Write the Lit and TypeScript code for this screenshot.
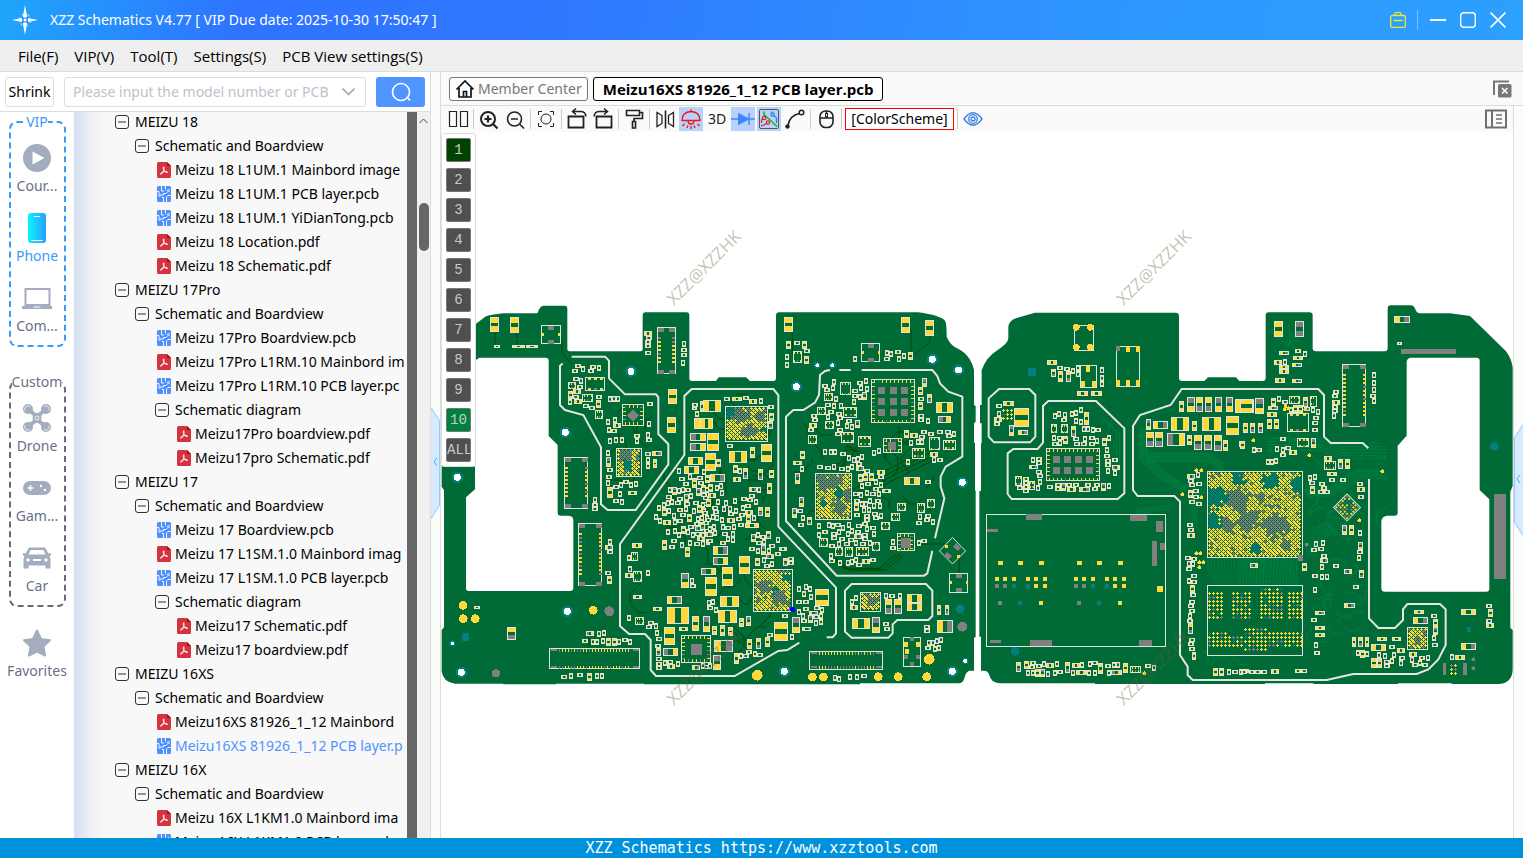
import { LitElement, html, svg, css, nothing } from "lit";
import { customElement, property } from "lit/decorators.js";
import { classMap } from "lit/directives/class-map.js";

/* ---------- board artwork ---------- */

type Ink = "trace" | "glow" | "line" | "base" | "gray" | "gold" | "teal" | "white" | "blue";
const INK: Record<Ink, string> = {
  trace: "#004b00",
  glow: "#008040",
  line: "#dfe4df",
  base: "#006b36",
  gray: "#808080",
  gold: "#ffd83c",
  teal: "#008080",
  white: "#ffffff",
  blue: "#0000ff",
};

let seed = 7;
const rnd = () => {
  seed = (seed * 1664525 + 1013904223) >>> 0;
  return seed / 4294967296;
};
const snap = (n: number) => Math.round(n / 3) * 3;

/* A tile holds artwork in thirds of a pixel, relative to its own origin. */
class Tile {
  layers: Partial<Record<Ink, string>> = {};
  taken: number[][] = [];
  traces = { trace: "", glow: "" };
  constructor(public ox: number, public oy: number) {}

  fill(ink: Ink, x: number, y: number, w: number, h: number) {
    const W = Math.max(3, snap(w));
    const H = Math.max(3, snap(h));
    this.layers[ink] = (this.layers[ink] ?? "") + `M${snap(x)} ${snap(y)}h${W}v${H}h${-W}z`;
  }
  frame(x: number, y: number, w: number, h: number) {
    x = snap(x); y = snap(y); w = snap(w); h = snap(h);
    this.fill("line", x, y, w, h);
    this.fill("base", x + 3, y + 3, w - 6, h - 6);
    this.taken.push([x, y, w, h]);
  }
  part(x: number, y: number, w: number, h: number, kind = "y") {
    x = snap(x); y = snap(y); w = snap(w); h = snap(h);
    this.frame(x, y, w, h);
    const a: Ink = kind === "G" || kind === "b" ? "gray" : "gold";
    const b: Ink = kind === "g" || kind === "b" ? "gray" : "gold";
    if (w > h) {
      const p = Math.max(3, snap((w - 6) * 0.34));
      this.fill(a, x + 3, y + 3, p, h - 6);
      this.fill(b, x + w - 3 - p, y + 3, p, h - 6);
    } else {
      const p = Math.max(3, snap((h - 6) * 0.36));
      this.fill(a, x + 3, y + 3, w - 6, p);
      this.fill(b, x + 3, y + h - 3 - p, w - 6, p);
    }
  }
  parts(list: string) {
    for (const item of list.trim().split(/\s+/)) {
      const [x, y, w, h, k] = item.split(",");
      this.part(+x, +y, +w, +h, k);
    }
  }
  free(x: number, y: number, w: number, h: number) {
    return !this.taken.some(([a, b, c, d]) => x < a + c && x + w > a && y < b + d && y + h > b);
  }
  cluster(x: number, y: number, w: number, h: number, density = 0.7) {
    const tries = Math.round((w * h * density) / 36);
    for (let i = 0; i < tries; i++) {
      const tall = w < 16 ? true : h < 16 ? false : rnd() < 0.5;
      const long = rnd() < 0.25 ? 24 : 18;
      const short = long === 24 ? 15 : 12;
      const pw = tall ? short : long;
      const ph = tall ? long : short;
      if (pw > w + 3 || ph > h + 3) continue;
      const px = snap(x + rnd() * Math.max(0, w - pw));
      const py = snap(y + rnd() * Math.max(0, h - ph));
      if (!this.free(px, py, pw, ph)) continue;
      this.part(px, py, pw, ph, "yygGy"[Math.floor(rnd() * 5)]);
    }
  }
  connector(x: number, y: number, w: number, h: number) {
    this.frame(x, y, w, h);
    const flat = w > h;
    const len = flat ? w : h;
    for (const far of [false, true]) {
      for (let p = 30; p < len - 30; p += flat ? 9 : 12) {
        const ink: Ink = rnd() < 0.28 ? "gray" : "gold";
        if (flat) this.fill(ink, x + p, far ? y + h - 12 : y + 3, 3, 9);
        else this.fill(ink, far ? x + w - 12 : x + 3, y + p, 9, 6);
      }
      if (flat) {
        this.fill("gray", x + 6, far ? y + h - 12 : y + 3, 18, 6);
        this.fill("gray", x + w - 24, far ? y + h - 12 : y + 3, 18, 6);
      } else {
        this.fill("gray", far ? x + w - 21 : x + 3, y + 3, 18, 12);
        this.fill("gray", far ? x + w - 21 : x + 3, y + h - 15, 18, 12);
      }
    }
  }
  chip(x: number, y: number, w: number, h: number, cols: number, rows: number, pad = 24) {
    this.frame(x, y, w, h);
    for (let p = 9; p < w - 9; p += 12) {
      this.fill(rnd() < 0.15 ? "teal" : "gold", x + p, y + 3, 3, 9);
      this.fill(rnd() < 0.2 ? "gray" : "gold", x + p, y + h - 12, 3, 9);
    }
    for (let p = 9; p < h - 9; p += 12) {
      this.fill(rnd() < 0.3 ? "gray" : "gold", x + 3, y + p, 9, 3);
      this.fill(rnd() < 0.2 ? "gray" : "gold", x + w - 12, y + p, 9, 3);
    }
    const sx = (w - 30) / Math.max(cols, 1);
    const sy = (h - 30) / Math.max(rows, 1);
    for (let i = 0; i < cols; i++)
      for (let j = 0; j < rows; j++)
        this.fill("gray", x + 15 + sx * (i + 0.5) - pad / 2, y + 15 + sy * (j + 0.5) - pad / 2, pad, pad);
  }
  small(x: number, y: number, w: number, h: number) {
    this.frame(x, y, w, h);
    const px = w * 0.25;
    for (const fx of [0.12, 0.42, 0.72]) {
      this.fill("gold", x + w * fx + 1, y + 3, px / 2, 6);
      this.fill(fx > 0.4 && fx < 0.5 ? "gray" : "gold", x + w * fx + 1, y + h - 9, px / 2, 6);
    }
  }
  four(x: number, y: number, w: number, h: number) {
    this.frame(x, y, w, h);
    this.fill("gray", x + w / 2 - 9, y + 3, 18, 12);
    this.fill("gray", x + w / 2 - 9, y + h - 15, 18, 12);
    this.fill("gold", x + 3, y + h / 2 - 6, 6, 9);
    this.fill("gold", x + w - 9, y + h / 2 - 6, 6, 9);
  }
  plus(ink: Ink, x: number, y: number) {
    x = snap(x); y = snap(y);
    this.layers[ink] = (this.layers[ink] ?? "") + `M${x} ${y}h9v3h-9zM${x + 3} ${y - 3}h3v9h-3z`;
  }
  balls(x: number, y: number, w: number, h: number, patches: [Ink, number, number, number][] = []) {
    x = snap(x); y = snap(y); w = snap(w); h = snap(h);
    this.frame(x, y, w, h);
    for (let j = 0, py = y + 6; py < y + h - 6; py += 6, j++) {
      for (let px = x + 3 + (j % 2) * 6; px < x + w - 9; px += 12) {
        const hit = patches.find(([, cx, cy, r]) => Math.hypot((px - x) / w - cx, (py - y) / h - cy) < r * (0.6 + rnd() * 0.6));
        const ink: Ink = hit ? hit[0] : rnd() < 0.1 ? "gray" : "gold";
        this.plus(ink, px, py);
        if (ink === "gold" && rnd() < 0.3) this.fill("gold", px + 6, py + 3, 3, 3);
      }
    }
  }
  grid(x: number, y: number, cols: number, rows: number) {
    for (let i = 0; i < cols; i++)
      for (let j = 0; j < rows; j++) {
        const r = rnd();
        this.plus(r < 0.2 ? "gray" : r < 0.24 ? "teal" : "gold", x + i * 12, y + j * 12);
      }
  }
  wires(ink: "trace" | "glow", x: number, y: number, w: number, h: number, n: number) {
    for (let i = 0; i < n; i++) {
      let px = x + rnd() * w;
      let py = y + rnd() * h;
      let d = `M${snap(px)} ${snap(py)}`;
      let dir = Math.floor(rnd() * 8);
      for (let k = 0; k < 3; k++) {
        const step = 9 + rnd() * 27;
        const nx = px + Math.round(Math.cos((dir * Math.PI) / 4)) * step;
        const ny = py + Math.round(Math.sin((dir * Math.PI) / 4)) * step;
        if (nx < x || ny < y || nx > x + w || ny > y + h) break;
        px = nx;
        py = ny;
        d += `L${snap(px)} ${snap(py)}`;
        dir += rnd() < 0.5 ? 1 : -1;
      }
      this.traces[ink] += d;
    }
  }
  bus(ink: "trace" | "glow", points: number[][], count: number, dx: number, dy: number) {
    for (let i = 0; i < count; i++)
      this.traces[ink] += "M" + points.map(([x, y]) => `${x + i * dx} ${y + i * dy}`).join("L");
  }
  dots(ink: Ink, r: number, list: number[][]) {
    for (const [x, y] of list)
      this.layers[ink] =
        (this.layers[ink] ?? "") + `M${x - r} ${y}a${r} ${r} 0 1 1 ${2 * r} 0a${r} ${r} 0 1 1 ${-2 * r} 0z`;
  }
  holes(r: number, list: number[][]) {
    this.dots("teal", r, list);
    this.dots("white", r * 0.62, list);
  }
  wiring() {
    return svg`<g transform="translate(${this.ox} ${this.oy}) scale(.333333)" fill="none" stroke-width="3">
      <path d=${this.traces.trace} stroke=${INK.trace} />
      <path d=${this.traces.glow} stroke=${INK.glow} />
    </g>`;
  }
  render() {
    const order: Ink[] = ["line", "base", "gray", "gold", "teal", "white", "blue"];
    return svg`<g transform="translate(${this.ox} ${this.oy}) scale(.333333)">
      ${order.map((k) => (this.layers[k] ? svg`<path d=${this.layers[k]} fill=${INK[k]} />` : nothing))}
    </g>`;
  }
}

const A = new Tile(440, 290);
const B = new Tile(700, 290);
const C = new Tile(970, 290);
const D = new Tile(1240, 290);

/* left board, left half */
A.parts(`149,82,28,46 209,82,28,48 684,297,26,46 682,380,28,48 762,385,50,32 750,430,48,24,G 750,460,48,25,G
745,500,45,24 733,528,45,25 682,950,66,52 682,918,46,25,g 672,1010,34,55 670,1075,46,24,G 723,850,24,44,G
756,978,22,44 201,1010,27,38,g 637,482,30,14,g 640,507,13,28 498,502,16,30,G 500,590,17,33 565,604,28,12
575,760,30,14 580,915,27,13 755,350,16,10 780,332,28,34 163,165,18,8 217,165,40,8 257,165,36,8 103,948,18,10
640,952,27,13 718,1010,28,13 757,565,14,30 665,750,16,30 736,770,14,30`);
A.four(303, 106, 60, 58);
A.connector(652, 112, 56, 142);
A.connector(373, 500, 73, 156);
A.connector(415, 700, 73, 190);
A.connector(328, 1075, 274, 64);
A.chip(547, 343, 66, 66, 0, 0, 24);
A.chip(723, 1035, 90, 85, 1, 1, 33);
A.balls(527, 475, 78, 88, [["gray", 0.35, 0.2, 0.25], ["teal", 0.4, 0.6, 0.22], ["gray", 0.8, 0.3, 0.12]]);
A.small(435, 260, 60, 42);
A.small(427, 313, 34, 24);
A.small(466, 360, 24, 28);
A.small(383, 277, 24, 22);
A.small(574, 785, 22, 28);
A.small(580, 842, 27, 34);
A.small(586, 982, 27, 24);
const clustersA: number[][] = [
  [385, 222, 105, 30, 0.9], [378, 262, 55, 85, 0.5], [465, 315, 26, 40, 0.8], [420, 340, 50, 20, 0.7],
  [505, 315, 38, 30, 0.6], [498, 380, 48, 50, 0.7], [615, 335, 24, 20, 0.8], [614, 390, 26, 80, 0.6], [575, 430, 30, 40, 0.7],
  [495, 440, 60, 30, 0.5], [497, 472, 22, 130, 0.8], [610, 485, 26, 60, 0.7], [518, 570, 90, 28, 0.6], [515, 600, 40, 45, 0.5],
  [495, 740, 24, 62, 1], [495, 840, 22, 50, 1], [455, 605, 18, 68, 0.9], [613, 122, 24, 78, 1], [720, 143, 22, 88, 1],
  [422, 1020, 82, 22, 1], [422, 1045, 155, 22, 1], [362, 1148, 130, 22, 0.9], [710, 530, 100, 60, 0.6],
  [675, 590, 135, 60, 0.8], [640, 630, 170, 80, 0.8], [675, 700, 135, 80, 0.6], [555, 780, 22, 90, 0.4],
  [612, 840, 20, 24, 0.8], [615, 980, 45, 40, 0.7], [560, 975, 18, 34, 0.9], [645, 1020, 20, 120, 0.7],
  [665, 1105, 55, 34, 0.8], [745, 860, 26, 40, 0.6], [748, 1125, 60, 14, 0.9], [750, 330, 30, 50, 0.5],
];
clustersA.forEach(([x, y, w, h, d]) => A.cluster(x, y, w, h, d));
A.holes(17, [[573, 244], [376, 427], [52, 562], [382, 964], [64, 1147]]);
A.holes(9, [[37, 1060]]);
A.dots("gold", 13, [[69, 946], [70, 986], [106, 986], [460, 961]]);
A.dots("gray", 15, [[508, 964]]);
A.dots("gray", 12, [[168, 1150]]);
A.fill("teal", 66, 1030, 21, 24);
A.layers.gray += "M580 359l18 18-18 18-18-18z";
A.wires("trace", 490, 330, 150, 260, 12);
A.wires("trace", 660, 540, 150, 240, 18);
A.wires("trace", 400, 1040, 130, 110, 8);
A.bus("trace", [[165, 128], [165, 168]], 2, 66, 0);
A.bus("trace", [[352, 130], [366, 150], [366, 190], [395, 222]], 1, 0, 0);
A.bus("trace", [[602, 880], [570, 910], [570, 940], [595, 968], [625, 968]], 1, 0, 0);

/* left board, right half */
B.parts(`10,330,55,36 0,385,38,32 22,430,36,55 88,483,55,36 15,488,34,55 183,462,34,55 30,552,45,24,g 38,768,46,28,g
38,800,46,25,G 118,797,33,55 2,835,44,22,G 66,832,34,58 15,862,36,56 60,918,58,33 53,960,56,38 42,1050,56,35,g
223,995,42,56 275,980,24,48,G 346,898,42,52 10,978,22,48,G 40,1095,24,45,G 252,80,28,46 603,80,28,48 676,90,26,48
708,337,52,32 715,378,40,22,G 612,560,48,24 455,985,55,34 517,980,24,48,G 556,927,22,46,g 582,927,24,46,g
620,912,46,26 620,940,46,24 712,990,48,40,g 135,700,42,16 200,580,14,32 174,538,16,32,g 150,470,15,32 130,535,15,32,g
285,548,14,32,G 297,620,14,30,G 277,655,14,30,G 680,312,15,28,g 667,265,16,28,G 280,512,28,12 547,598,27,12
327,962,28,13,g 305,1012,28,13,g 97,322,30,13 207,540,14,24 195,650,14,30 174,652,14,26,g 238,770,24,13
183,766,16,30,G 141,1048,14,30 167,1044,14,32,g 195,1042,14,30 118,983,14,28 138,978,14,30,G 102,1088,14,32
60,1005,14,32 37,1008,14,28 83,1010,14,26 712,946,13,30 735,946,13,30,g`);
B.four(484, 160, 58, 58);
B.four(748, 850, 58, 60);
B.connector(328, 1083, 223, 56);
B.chip(513, 268, 133, 133, 3, 3, 21);
B.chip(590, 730, 53, 55, 1, 1, 30);
B.chip(548, 445, 58, 45, 1, 1, 24);
B.balls(75, 347, 128, 108, [["gray", 0.35, 0.25, 0.22], ["teal", 0.1, 0.2, 0.18], ["gray", 0.5, 0.7, 0.2], ["gray", 0.8, 0.3, 0.12], ["teal", 0.85, 0.65, 0.08]]);
B.balls(160, 838, 120, 130, [["gray", 0.25, 0.4, 0.16], ["gray", 0.6, 0.65, 0.2], ["teal", 0.5, 0.5, 0.1], ["teal", 0.8, 0.2, 0.1], ["gray", 0.9, 0.75, 0.12]]);
B.balls(345, 548, 110, 142, [["gray", 0.15, 0.15, 0.22], ["teal", 0.6, 0.4, 0.12], ["gray", 0.5, 0.15, 0.18], ["gray", 0.6, 0.7, 0.2], ["gray", 0.85, 0.45, 0.15], ["teal", 0.2, 0.65, 0.09]]);
B.balls(480, 907, 62, 60, [["gray", 0.5, 0.4, 0.25]]);
[
  [420, 277, 34, 40], [430, 350, 42, 32], [424, 425, 38, 34], [474, 437, 40, 32], [688, 442, 33, 40], [728, 450, 38, 30],
  [635, 473, 38, 32], [373, 308, 26, 24], [375, 392, 26, 24], [325, 434, 28, 28], [352, 352, 26, 24], [592, 638, 28, 24],
  [652, 638, 24, 30], [680, 628, 24, 28], [572, 668, 26, 24], [543, 697, 28, 24], [468, 770, 38, 28], [515, 757, 24, 28],
  [436, 772, 24, 30], [404, 770, 24, 28], [358, 744, 26, 26], [278, 184, 28, 36],
].forEach(([x, y, w, h]) => B.small(x, y, w, h));
B.frame(610, 1040, 54, 90);
[[613, 1056], [648, 1056], [616, 1076]].forEach(([x, y]) => B.fill("gold", x, y, 12, 15));
[[613, 1096], [648, 1096], [630, 1040], [630, 1116]].forEach(([x, y]) => B.fill("gray", x, y, 12, 12));
const clustersB: number[][] = [
  [70, 318, 120, 26, 0.8], [205, 345, 18, 82, 0.7], [75, 458, 28, 20, 0.9], [45, 500, 22, 40, 0.6], [95, 520, 38, 60, 0.5],
  [0, 580, 78, 45, 1], [0, 625, 60, 140, 0.7], [60, 620, 110, 80, 0.7], [60, 700, 50, 70, 0.6], [145, 590, 40, 60, 0.8],
  [110, 655, 50, 60, 0.6], [145, 720, 80, 75, 0.6], [225, 740, 22, 60, 0.5], [165, 790, 60, 45, 0.7], [245, 800, 40, 32, 0.7],
  [285, 875, 62, 75, 0.8], [285, 945, 90, 65, 0.6], [20, 920, 34, 50, 0.6], [110, 1080, 80, 30, 0.7], [200, 1030, 18, 50, 0.8],
  [245, 972, 24, 16, 1], [270, 1032, 20, 30, 0.6], [365, 262, 52, 150, 0.6], [320, 370, 34, 60, 0.7], [400, 325, 30, 120, 0.6],
  [455, 265, 55, 80, 0.6], [430, 385, 60, 35, 0.6], [651, 265, 22, 135, 1], [655, 380, 50, 22, 0.8], [610, 420, 70, 50, 0.5],
  [650, 420, 120, 25, 0.5], [515, 470, 30, 35, 0.7], [300, 480, 20, 70, 0.5], [345, 520, 110, 27, 0.9], [365, 475, 80, 24, 0.5],
  [440, 490, 60, 55, 0.8], [470, 535, 90, 90, 1], [460, 600, 20, 90, 1], [480, 625, 74, 75, 1], [290, 650, 24, 62, 1], [312, 680, 30, 28, 0.8],
  [345, 695, 185, 60, 0.9], [410, 745, 110, 26, 0.7], [385, 760, 20, 60, 0.7], [410, 800, 120, 30, 0.6], [565, 735, 24, 50, 0.9],
  [648, 740, 36, 30, 0.7], [645, 665, 60, 40, 0.7], [665, 560, 30, 24, 0.9], [253, 150, 80, 34, 0.5], [253, 185, 22, 50, 0.9],
  [308, 175, 28, 60, 0.8], [550, 178, 90, 40, 0.5], [450, 185, 24, 32, 0.9], [670, 1000, 20, 30, 0.9], [672, 1040, 60, 50, 0.7],
  [435, 1150, 75, 20, 1], [398, 1152, 26, 24, 1], [448, 910, 28, 62, 0.8], [540, 908, 70, 18, 0.6], [545, 990, 24, 40, 0.7],
  [610, 505, 24, 20, 0.6], [690, 485, 40, 36, 0.6], [0, 1120, 40, 16, 1],
];
clustersB.forEach(([x, y, w, h, d]) => B.cluster(x, y, w, h, d));
B.holes(17, [[289, 290], [697, 208], [775, 240], [787, 577], [253, 1144], [757, 1144]]);
B.holes(10, [[352, 226], [397, 226], [796, 1113]]);
B.dots("gold", 13, [[337, 1161], [370, 1161], [535, 1160], [595, 1160], [680, 1160]]);
B.dots("gold", 16, [[172, 1156], [688, 1108]]);
B.dots("gray", 15, [[787, 1010]]);
B.dots("teal", 13, [[781, 956]]);
B.dots("blue", 8, [[278, 959]]);
B.wires("trace", 0, 310, 225, 420, 28);
B.wires("trace", 0, 720, 220, 380, 24);
B.wires("trace", 275, 380, 235, 310, 20);
B.wires("trace", 540, 270, 170, 400, 18);
B.bus("trace", [[455, 600], [560, 540], [700, 470]], 4, 3, 12);
B.bus("trace", [[590, 790], [540, 835], [430, 835], [390, 800]], 3, 9, 3);
B.bus("trace", [[277, 125], [277, 200]], 1, 0, 0);
B.bus("trace", [[643, 762], [740, 762]], 1, 0, 0);
B.bus("trace", [[633, 120], [633, 185]], 1, 0, 0);
B.bus("trace", [[690, 135], [690, 155], [645, 195]], 1, 0, 0);
B.bus("trace", [[778, 805], [778, 850]], 1, 0, 0);

/* right board, left half */
C.parts(`232,210,30,16 133,355,46,58 322,303,32,14 363,303,32,14 304,408,16,32,g 343,366,16,38 650,320,24,46,G
679,320,22,44,g 706,320,22,44,g 736,320,22,44,G 767,320,22,44,G 795,328,58,42 604,380,54,42 550,393,46,24,g 695,380,56,42
767,377,40,56 528,427,24,46,g 556,427,24,46,g 590,430,54,38,G 673,436,24,46,g 702,436,24,46,g 733,436,24,48,g
627,333,14,32 528,388,14,32,G 667,394,14,30 820,400,14,30 652,436,14,30 759,450,14,32 100,333,34,14 145,420,30,16,g
118,405,14,32,G 265,243,16,32 288,243,16,32,g 178,526,28,12,g 139,1117,16,30,g 285,1115,16,32,g 384,1119,15,32
460,1120,16,30 423,1140,32,14,G 318,1140,34,16 655,1000,16,32,g 667,1085,12,24 292,590,28,16 326,592,32,14,g`);
C.frame(313, 106, 61, 78);
C.dots("gold", 10, [[319, 112], [361, 112], [319, 172], [361, 172]]);
C.frame(439, 167, 73, 123);
C.fill("gray", 439, 168, 12, 15);
[[468, 168], [498, 168], [438, 270], [468, 270], [498, 270]].forEach(([x, y]) => C.fill("gold", x, y, 12, 17));
C.frame(331, 226, 52, 70);
[[348, 228], [334, 273], [366, 273]].forEach(([x, y]) => C.fill("gold", x, y, 13, 18));
C.chip(227, 475, 163, 100, 4, 2, 21);
C.small(242, 403, 18, 28);
C.small(272, 403, 20, 28);
C.small(136, 558, 20, 30);
C.small(176, 572, 18, 26);
C.small(480, 1127, 34, 22);
C.grid(97, 360, 3, 3);
C.balls(710, 543, 288, 262, [
  ["teal", 0.06, 0.3, 0.14], ["teal", 0.04, 0.58, 0.1], ["teal", 0.3, 0.1, 0.08], ["teal", 0.65, 0.12, 0.1], ["teal", 0.95, 0.16, 0.1],
  ["gray", 0.3, 0.32, 0.13], ["gray", 0.42, 0.55, 0.13], ["gray", 0.2, 0.62, 0.08], ["gray", 0.7, 0.62, 0.14],
  ["teal", 0.5, 0.88, 0.07], ["gray", 0.8, 0.85, 0.06], ["gray", 0.55, 0.3, 0.06],
]);
C.frame(710, 886, 288, 212);
C.grid(714, 910, 4, 7);
C.grid(786, 910, 5, 7);
C.grid(870, 898, 6, 8);
C.grid(954, 910, 4, 7);
C.grid(714, 1030, 5, 4);
C.grid(774, 1042, 6, 3);
C.grid(822, 1018, 6, 6);
C.grid(894, 1030, 9, 4);
C.frame(47, 673, 540, 400);
(
  [
    ["gray", 168, 673, 48, 17], ["gray", 480, 676, 51, 17], ["gray", 558, 693, 21, 33], ["gray", 546, 753, 15, 75],
    ["gray", 570, 759, 15, 20], ["gray", 51, 717, 33, 9], ["gray", 60, 1050, 33, 9], ["gray", 180, 1050, 66, 17],
    ["gray", 507, 1050, 39, 17], ["gold", 561, 888, 18, 18], ["teal", 174, 234, 24, 24],
  ] as [Ink, number, number, number, number][]
).forEach((r) => C.fill(...r));
[84, 321].forEach((x) => {
  [0, 60, 123].forEach((dx) => C.fill("gold", x + dx, 813, 14, 12));
  [-9, 15, 42, 84, 108, 135].forEach((dx) => C.fill("gold", x + dx, 861, 12, 12));
  ([["gray", -9], ["gray", 15], ["teal", 42], ["teal", 84], ["gold", 108], ["gold", 135]] as [Ink, number][]).forEach(
    ([ink, dx]) => C.fill(ink, x + dx, 883, 12, 12),
  );
  ([["gray", 0], ["teal", 60], ["gold", 123]] as [Ink, number][]).forEach(([ink, dx]) => C.fill(ink, x + dx, 933, 13, 12));
});
C.dots("teal", 13, [[136, 1084]]);
C.dots("gold", 6, [[679, 541], [694, 541], [637, 613], [694, 622], [679, 790], [691, 790], [688, 817], [700, 817], [688, 832], [523, 1150]]);
const clustersC: number[][] = [
  [72, 340, 24, 75, 0.9], [238, 362, 60, 36, 0.9], [300, 350, 60, 60, 0.5], [235, 435, 190, 34, 1], [330, 405, 70, 30, 0.6],
  [178, 495, 45, 30, 0.8], [195, 540, 28, 65, 0.8], [158, 555, 16, 55, 0.8], [135, 545, 24, 60, 0.8], [226, 577, 200, 32, 1],
  [402, 448, 22, 112, 0.9], [425, 495, 22, 70, 0.9], [240, 228, 75, 44, 0.8], [390, 228, 14, 66, 0.9], [318, 225, 14, 40, 0.7],
  [158, 1112, 300, 24, 1], [158, 1138, 300, 22, 0.9], [518, 1122, 40, 26, 0.8], [652, 540, 24, 50, 1], [676, 545, 24, 45, 0.8],
  [655, 595, 42, 56, 0.5], [650, 698, 26, 52, 1], [645, 790, 38, 52, 1], [650, 850, 34, 75, 1], [650, 930, 26, 70, 1],
  [650, 1035, 26, 50, 1], [710, 1134, 130, 22, 0.6], [805, 450, 24, 32, 0.8],
];
clustersC.forEach(([x, y, w, h, d]) => C.cluster(x, y, w, h, d));
C.bus("glow", [[510, 420], [510, 510], [575, 570], [640, 605]], 6, 4, -3);
C.bus("glow", [[530, 490], [720, 490], [760, 520]], 6, 0, 5);
C.bus("glow", [[500, 660], [600, 645]], 3, 0, 6);
C.bus("glow", [[714, 806], [714, 840], [740, 884]], 26, 10, 0);
C.bus("glow", [[690, 560], [660, 640], [660, 700]], 4, 7, 6);
C.wires("glow", 690, 990, 150, 140, 12);
C.wires("glow", 590, 960, 36, 110, 5);
C.wires("glow", 260, 250, 190, 240, 6);
C.bus("glow", [[390, 380], [440, 430], [440, 560]], 2, 9, 4);

/* right board, right half */
D.parts(`102,94,28,49 166,94,28,49,b 462,79,47,22,g 664,958,46,18 664,1059,46,20,g 118,184,30,13,g 118,224,30,13
118,238,30,14 160,198,30,13 157,218,30,12,g 106,265,30,14 157,267,30,13,g 45,323,26,48,G 0,328,40,42 8,400,14,30
30,400,16,30,g 53,400,14,30,g 82,388,14,30 101,388,14,30 82,367,30,14 84,349,30,13,g 393,1062,46,22 393,1105,18,30
412,1105,16,30 520,980,46,20,g 312,938,32,14,g 306,706,15,30,G 326,706,15,30 294,507,14,30,g 315,507,14,30 262,547,30,13
335,1042,13,30 355,1042,14,30,g 374,1042,13,30 412,1042,30,13 457,1042,28,13 522,960,30,12 226,1008,30,13
226,1030,30,13 226,962,30,12,g 213,445,16,30,G 188,322,14,30,g 646,1096,30,15 472,155,16,9`);
D.connector(307, 223, 73, 190);
D.small(140, 370, 66, 57);
D.small(148, 318, 34, 25);
D.small(210, 317, 22, 32);
D.small(172, 445, 36, 28);
D.small(252, 513, 35, 26);
D.balls(502, 1010, 64, 68, [["gray", 0.4, 0.6, 0.2], ["gray", 0.8, 0.3, 0.15]]);
D.grid(630, 1126, 2, 3);
(
  [
    ["gray", 483, 178, 165, 14], ["gray", 762, 612, 36, 255], ["gray", 609, 1120, 9, 35], ["gray", 669, 1120, 12, 35],
    ["gray", 174, 795, 15, 18], ["teal", 681, 1012, 12, 15],
  ] as [Ink, number, number, number, number][]
).forEach((r) => D.fill(...r));
D.dots("gray", 6, [[700, 1108], [700, 1135], [200, 764]]);
D.dots("teal", 12, [[763, 469]]);
D.dots("gold", 6, [[40, 451], [208, 496], [427, 544], [358, 691], [196, 358], [137, 348], [146, 355], [134, 358]]);
const clustersD: number[][] = [
  [160, 175, 45, 40, 0.7], [102, 200, 40, 40, 0.7], [275, 290, 22, 100, 1], [387, 238, 22, 105, 1], [85, 318, 60, 30, 0.8],
  [135, 345, 100, 24, 0.6], [217, 350, 22, 75, 0.6], [105, 440, 50, 12, 0.9], [105, 468, 65, 34, 0.8], [30, 468, 40, 22, 1],
  [78, 505, 36, 24, 1], [0, 452, 18, 28, 0.9], [205, 550, 26, 68, 0.9], [232, 575, 40, 40, 0.7], [252, 498, 26, 12, 1],
  [260, 562, 60, 14, 1], [350, 562, 22, 72, 1], [350, 720, 20, 100, 0.9], [358, 840, 12, 24, 1], [210, 750, 46, 40, 0.7],
  [228, 780, 40, 100, 0.7], [268, 815, 28, 26, 1], [312, 830, 22, 24, 1], [340, 880, 22, 26, 1], [183, 818, 24, 26, 1],
  [30, 815, 34, 24, 1], [212, 890, 24, 24, 1], [214, 978, 24, 26, 1], [220, 1048, 20, 50, 0.7], [342, 1080, 48, 22, 1],
  [408, 1085, 60, 50, 0.9], [470, 1065, 28, 65, 0.9], [500, 1085, 72, 46, 1], [572, 968, 24, 108, 1], [445, 1060, 24, 24, 0.8],
  [738, 935, 22, 80, 1], [630, 1092, 16, 20, 1], [0, 1138, 120, 15, 0.9], [165, 1136, 45, 14, 1], [215, 847, 20, 26, 0.7],
];
clustersD.forEach(([x, y, w, h, d]) => D.cluster(x, y, w, h, d));
D.wires("glow", 90, 90, 110, 170, 10);
D.wires("glow", 20, 410, 430, 130, 22);
D.wires("glow", 195, 530, 180, 440, 34);
D.wires("glow", 200, 930, 180, 200, 10);
D.bus("glow", [[190, 600], [270, 590], [350, 540], [425, 540]], 6, 3, 5);
D.bus("glow", [[190, 760], [250, 700], [280, 700]], 6, 2, 7);
D.bus("glow", [[80, 445], [250, 445], [300, 470], [440, 470]], 5, 0, 9);
D.bus("glow", [[0, 806], [0, 884]], 18, 10, 0);
D.bus("glow", [[410, 700], [410, 670], [430, 660], [465, 630]], 1, 0, 0);

const LEFT_BOARD =
  "M5 100L100 107L136 80Q150 74 190 70H292L298 56Q304 47 310 47H374Q382 47 382 56V176Q382 184 392 184H600Q608 184 608 176V76Q608 67 617 67H740Q748 67 748 76V265Q748 273 756 273H828L836 262H918L930 273H1000Q1008 273 1008 264V77Q1008 67 1018 67H1435Q1500 76 1515 92Q1520 100 1520 140Q1528 160 1545 172Q1590 190 1602 240V345L1607 348V395L1602 400V455L1605 460V600L1607 603V1040L1602 1044V1142H1588Q1577 1146 1574 1162Q1570 1180 1556 1180H1260V1183H612V1181H348V1183H190V1181H45Q10 1176 5 1145V1020L12 1012V600L5 590Z" +
  "M105 212L118 203H316Q326 203 326 213V438L353 465V668Q353 677 362 677H385Q400 677 400 692V893Q400 903 390 903H86Q78 903 78 895V622L105 598Z";
const RIGHT_BOARD =
  "M35 240Q50 200 80 182Q115 160 115 145V110Q118 90 140 84L195 68H617Q627 68 627 78V264Q627 273 637 273H703L714 262H798L808 273H878Q887 273 887 264V76Q887 67 896 67H1018Q1028 67 1028 76V175Q1028 184 1038 184H1244Q1253 184 1253 175V56Q1253 46 1263 46H1322Q1332 46 1336 58Q1340 70 1350 70H1440L1500 78L1608 184Q1624 205 1628 232V588L1621 605V1014L1628 1020V1140Q1626 1180 1585 1182H1445V1180H1285V1182H1030V1180H885V1182H375V1180H90Q62 1178 58 1155Q54 1142 42 1142H33V1040H28V603H33V460H35V400H30V345H35Z" +
  "M1320 203H1519Q1529 203 1529 213V600L1558 628V896Q1558 905 1549 905H1244Q1234 905 1234 893V692Q1236 680 1250 677H1274Q1283 677 1283 668V467L1310 437V213Q1312 205 1320 203Z";
const LEFT_WALLS =
  "M395 200H495L507 212V265L555 313H648L655 322V432L685 462V523L587 660H503L483 643V472L430 375L375 360L360 345V228L368 220" +
  "M1160 1042H1178L1188 1030V893L1015 710V315L1000 297H755L733 318V495L540 762V1008L567 1032H615L632 1050V1140L648 1158H884L1015 1083L1042 1080L1078 1058" +
  "M1170 240L1155 243L1140 255L1137 315L1125 338L1090 360H1060L1038 380V693L1190 857H1452L1462 850L1477 782" +
  "M1485 745L1513 625L1502 590V560L1517 530L1567 500V320L1525 305L1500 280L1492 258L1477 240H1265M1198 240H1232" +
  "M1235 882H1458L1477 902V978L1465 990H1372L1358 1003V1030L1345 1043H1235L1215 1025V902Z";
const RIGHT_WALLS =
  "M87 297H178L196 315V440L180 457H72L56 440V325Z" +
  "M235 333H378L463 415V610L443 627H125L113 612V490L130 477H203L219 458V348Z" +
  "M1195 475L1178 459H1082L1062 440V315L1045 297H635L602 345L510 375L489 408V600L503 618H613L630 635V1095L653 1130V1155L668 1170H1070L1150 1152H1340L1375 1138L1405 1108L1427 1065V958L1410 942H1312L1299 958V990L1275 1014H1225L1197 985V567";

const MARKS = [[674, 306], [1124, 306], [674, 706], [1124, 706]];

/* ball field of the rotated package: colour, column, row */
const DIAMOND = [..."GYTYYG", ..."YTTGYY", ..."YTYTGY", ..."GYYGTY", ..."YYGYYG", ..."YGYYGY"].map((c, i) => ({
  ink: c === "G" ? INK.gray : c === "T" ? INK.teal : INK.gold,
  x: (i % 6) * 3 + 1,
  y: Math.floor(i / 6) * 3 + 1,
}));

@customElement("board-view")
class BoardView extends LitElement {
  static styles = css`
    :host { display: block; width: 100%; height: 100%; overflow: hidden; background: #fff; }
    svg { display: block; width: 100%; height: 100%; }
    .mark { font: 17px "Open Sans", "Noto Sans", sans-serif; fill: rgba(110, 95, 60, 0.4); }
  `;
  render() {
    return html`<svg viewBox="441 132 1072 706" role="img" aria-label="PCB layer view">
      <g transform="translate(440 290) scale(.333333)">
        <path d=${LEFT_BOARD} fill="#006b36" fill-rule="evenodd" />
      </g>
      <g transform="translate(970 290) scale(.333333)">
        <path d=${RIGHT_BOARD} fill="#006b36" fill-rule="evenodd" />
      </g>
      ${[A, B, C, D].map((t) => t.wiring())}
      <g fill="none" stroke="#e4e6e4" stroke-width="6">
        <path transform="translate(440 290) scale(.333333)" d=${LEFT_WALLS} />
        <path transform="translate(970 290) scale(.333333)" d=${RIGHT_WALLS} />
      </g>
      <g shape-rendering="crispEdges">${[A, B, C, D].map((t) => t.render())}</g>
      <g transform="translate(1347 494) rotate(45)">
        <rect width="19" height="19" fill="#006b36" stroke="#dfe4df" />
        ${DIAMOND.map((b) => svg`<rect x=${b.x} y=${b.y} width="2" height="2" fill=${b.ink} />`)}
      </g>
      <path d="M952.500 537.500l13 13.500-13 13-13-13z" fill="#006b36" stroke="#dfe4df" />
      <path d="M956 543l5 5-3 3-5-4zM944 556l3-4 5 4-4 4z" fill="#808080" />
      <path d="M945 545h3v3h-3zM957 555h3v3h-3z" fill="#ffd83c" />
      ${MARKS.map(([x, y]) => svg`<text class="mark" transform="translate(${x} ${y}) rotate(-45)">XZZ@XZZHK</text>`)}
    </svg>`;
  }
}

/* ---------- tree ---------- */

type Node = { level: number; kind: "group" | "pdf" | "pcb"; text: string; active?: boolean };
const g = (level: number, text: string): Node => ({ level, kind: "group", text });
const pdf = (level: number, text: string): Node => ({ level, kind: "pdf", text });
const pcb = (level: number, text: string, active = false): Node => ({ level, kind: "pcb", text, active });

const TREE: Node[] = [
  g(0, "MEIZU 18"), g(1, "Schematic and Boardview"),
  pdf(2, "Meizu 18 L1UM.1 Mainbord image"), pcb(2, "Meizu 18 L1UM.1 PCB layer.pcb"),
  pcb(2, "Meizu 18 L1UM.1 YiDianTong.pcb"), pdf(2, "Meizu 18 Location.pdf"), pdf(2, "Meizu 18 Schematic.pdf"),
  g(0, "MEIZU 17Pro"), g(1, "Schematic and Boardview"),
  pcb(2, "Meizu 17Pro Boardview.pcb"), pdf(2, "Meizu 17Pro L1RM.10 Mainbord im"), pcb(2, "Meizu 17Pro L1RM.10 PCB layer.pc"),
  g(2, "Schematic diagram"), pdf(3, "Meizu17Pro boardview.pdf"), pdf(3, "Meizu17pro Schematic.pdf"),
  g(0, "MEIZU 17"), g(1, "Schematic and Boardview"),
  pcb(2, "Meizu 17 Boardview.pcb"), pdf(2, "Meizu 17 L1SM.1.0 Mainbord imag"), pcb(2, "Meizu 17 L1SM.1.0 PCB layer.pcb"),
  g(2, "Schematic diagram"), pdf(3, "Meizu17 Schematic.pdf"), pdf(3, "Meizu17 boardview.pdf"),
  g(0, "MEIZU 16XS"), g(1, "Schematic and Boardview"),
  pdf(2, "Meizu16XS 81926_1_12 Mainbord"), pcb(2, "Meizu16XS 81926_1_12 PCB layer.p", true),
  g(0, "MEIZU 16X"), g(1, "Schematic and Boardview"),
  pdf(2, "Meizu 16X L1KM1.0 Mainbord ima"), pcb(2, "Meizu 16X L1KM1.0 PCB layer.pcb"),
];

const minusIcon = html`<svg width="14" height="14" viewBox="0 0 14 14" fill="none" stroke="#333">
  <rect x=".5" y=".5" width="13" height="13" rx="2.500" /><path d="M3 7h8" /></svg>`;
const pdfIcon = html`<svg width="14" height="16" viewBox="0 0 14 16">
  <path d="M1.500 0H10l4 4v10.500a1.500 1.500 0 0 1-1.500 1.500h-11A1.500 1.500 0 0 1 0 14.500v-13A1.500 1.500 0 0 1 1.500 0z" fill="#d4333f" />
  <path d="M10 0l4 4h-4z" fill="#8f1520" />
  <path d="M6.600 4.800c.8 0 .6 2 0 3.600-.7 1.900-1.900 4-2.800 4-1.300-.3.400-1.900 2.400-2.500 2-.6 4.400-.6 4.500.2.100 1-2 .4-3.200-1-.9-1-1.600-4.100-.9-4.300z" fill="none" stroke="#fff" stroke-width=".9" /></svg>`;
const pcbIcon = html`<svg width="14" height="16" viewBox="0 0 14 16">
  <rect width="14" height="16" rx="1.500" fill="#4d90fe" />
  <g fill="none" stroke="#fff" stroke-width=".9"><path d="M4.500 0v5H7M8.500 0v3.500M11 5.500L9 7.500H6.500V9H3.500M0 5.500h2V8M9.500 16v-5l1.500-1.500h3M6.500 16v-4.500H5" />
  <circle cx="2.500" cy="9.500" r=".9" /><circle cx="11.500" cy="4.500" r=".9" /></g></svg>`;

@customElement("file-tree")
class FileTree extends LitElement {
  static styles = css`
    :host { display: block; flex: 1; min-width: 0; overflow: hidden; background: linear-gradient(90deg, #d5dff1 0, #eff1f5 18px, #f8f8f8 34px); }
    ul { list-style: none; margin: -2px 0 0; padding: 0; }
    li { display: flex; align-items: center; height: 24px; white-space: nowrap; padding-left: 41px; }
    .l1 { padding-left: 61px; }
    .l2 { padding-left: 81px; }
    .l3 { padding-left: 101px; }
    svg { flex: none; margin-right: 6px; display: block; }
    .file svg { margin: 0 4px 0 2px; }
    a { color: #000; text-decoration: none; line-height: 24px; }
    .active a { color: #4f93ff; }
  `;
  render() {
    return html`<ul>
      ${TREE.map((n) => html`<li class=${classMap({ ["l" + n.level]: true, file: n.kind !== "group", active: !!n.active })}>
        ${n.kind === "group" ? minusIcon : n.kind === "pdf" ? pdfIcon : pcbIcon}<a href="#">${n.text}</a>
      </li>`)}
    </ul>`;
  }
}

/* ---------- category rail ---------- */

const railIcons: Record<string, unknown> = {
  play: svg`<circle cx="15" cy="15" r="14" /><path d="M10.500 8.500v13L22.500 15z" fill="#fff" />`,
  phone: svg`<defs><linearGradient id="ph"><stop stop-color="#0cf3fb" /><stop offset="1" stop-color="#28a0ff" /></linearGradient></defs>
    <rect x="6" y="0" width="18" height="30" rx="3" fill="url(#ph)" /><path d="M12 3.500h6M9.500 27.500h11" stroke="#fff" />`,
  laptop: svg`<path d="M3.500 6h24v16h-24z" fill="none" stroke="#a4acbf" stroke-width="2" /><path d="M0 23h30v3H0z" /><path d="M11.500 23.500h7v1h-7z" fill="#fff" />`,
  drone: svg`<g><circle cx="6" cy="6" r="5" /><circle cx="24" cy="6" r="5" /><circle cx="6" cy="24" r="5" /><circle cx="24" cy="24" r="5" /></g>
    <path d="M6 6l7 6h4l7-6M6 24l7-6h4l7 6" stroke="#a4acbf" stroke-width="4" fill="none" /><circle cx="15" cy="15" r="4.500" />
    <g fill="none" stroke="#fff" stroke-width=".8"><circle cx="15" cy="15" r="2" /><path d="M3 7.500a3.300 3.300 0 0 1 5-4M27 7.500a3.300 3.300 0 0 0-5-4M3 22.500a3.300 3.300 0 0 0 5 4M27 22.500a3.300 3.300 0 0 1-5 4" /></g>`,
  game: svg`<rect x="1" y="8" width="28" height="14" rx="7" /><path d="M8.500 12v6M5.500 15h6" stroke="#fff" stroke-width="1.500" /><circle cx="19" cy="13" r="1.200" fill="#fff" /><circle cx="23" cy="17" r="1.200" fill="#fff" />`,
  car: svg`<path d="M7 4.500h16l3.500 6 2.500-.5v2.500l-1.500.5 1 3v9.500h-5V22.500H6.500v3h-5V16l1-3-1.500-.5V10l2.500.5z" /><path d="M8.500 7h13l2 4.500h-17z" fill="#fff" /><path d="M11 17h8" stroke="#fff" stroke-width="2" /><circle cx="6" cy="17" r="1.700" fill="#fff" /><circle cx="24" cy="17" r="1.700" fill="#fff" />`,
  star: svg`<path d="M15 2.500l4 8.500 9 1.200-6.600 6.300 1.700 9L15 23.500l-8.100 4 1.700-9L2 12.200 11 11z" stroke="#a4acbf" stroke-width="2" stroke-linejoin="round" />`,
};

@customElement("category-rail")
class CategoryRail extends LitElement {
  static styles = css`
    :host { display: flex; flex-direction: column; align-items: center; width: 74px; flex: none; background: #fff; }
    fieldset { box-sizing: border-box; width: 57px; height: 235px; margin: 0 0 25px; padding: 11px 0 0; border: 2px dashed #64697b; border-radius: 8px; min-width: 0; }
    fieldset + fieldset { margin-bottom: 21px; }
    legend { margin: 0 auto; padding: 0; color: #697088; line-height: 20px; white-space: nowrap; }
    .vip { border-color: #379bf9; }
    .vip legend { color: #379bf9; }
    button { display: flex; flex-direction: column; align-items: center; width: 100%; height: 70px; padding: 0; border: 0; background: none; font: inherit; color: #697088; line-height: 20px; gap: 3px; }
    .on { color: #379bf9; }
    svg { display: block; fill: #a4acbf; }
  `;
  item(icon: string, text: string, on = false) {
    return html`<button class=${on ? "on" : ""}><svg width="30" height="30" viewBox="0 0 30 30">${railIcons[icon]}</svg>${text}</button>`;
  }
  render() {
    return html`
      <fieldset class="vip"><legend>VIP</legend>
        ${this.item("play", "Cour...")}${this.item("phone", "Phone", true)}${this.item("laptop", "Com...")}
      </fieldset>
      <fieldset><legend>Custom</legend>
        ${this.item("drone", "Drone")}${this.item("game", "Gam...")}${this.item("car", "Car")}
      </fieldset>
      ${this.item("star", "Favorites")}`;
  }
}

/* ---------- toolbar ---------- */

const tools: Record<string, unknown> = {
  columns: svg`<path d="M3.500 4.500h7v15h-7zM14.500 4.500h7v15h-7z" stroke-width="1.200" />`,
  zoomIn: svg`<circle cx="11" cy="12" r="7" stroke-width="2" /><path d="M16 17l4.500 4.500M11 8.500v7M7.500 12h7" stroke-width="2.200" />`,
  zoomOut: svg`<circle cx="11.500" cy="12" r="7" stroke-width="1.600" /><path d="M16.500 17l4.500 4.500M8 12h7" stroke-width="1.600" />`,
  target: svg`<circle cx="12" cy="12" r="5" /><path d="M4.500 8V4.500H8M16 4.500h3.500V8M19.500 16v3.500H16M8 19.500H4.500V16" />`,
  rotL: svg`<path d="M3.500 9.500h15v11h-15z" stroke-width="1.800" /><path d="M8 4.500h7.500q5 0 5.500 5M11 1.500l-3.500 3 3.500 3" stroke-width="1.500" />`,
  rotR: svg`<path d="M5.500 9.500h15v11h-15z" stroke-width="1.800" /><path d="M16 4.500H8.500q-5 0-5.500 5M13 1.500l3.500 3-3.500 3" stroke-width="1.500" />`,
  roller: svg`<path d="M4.500 3.500h13v5h-13zM17.500 5.500h3v6h-8.500v3M10.500 14.500h3v6.500h-3z" stroke-width="1.600" />`,
  mirror: svg`<path d="M4 5.500v14l5-3v-8zM20.500 5.500v14l-5-3v-8z" stroke-width="1.300" /><path d="M12.500 3.500v18" stroke-width="1.600" />`,
  lamp: svg`<g stroke="#f01616" stroke-width="1.400"><path d="M3 13.500q0-8.500 9-9 9 .5 9 9zM9 13.500q0 3.500 3 3.500t3-3.500M12 2.500v2M5.500 17l-2 2M9 18.500l-1 2.500M12 19v3M15 18.500l1 2.500M18.500 17l2 2" /></g>`,
  diode: svg`<path d="M0 12h24M18 6v12" stroke="#3f87ff" stroke-width="1.400" /><path d="M7.500 6.500L18 12 7.500 17.500z" fill="#3f87ff" stroke="#3f87ff" />`,
  layers: svg`<rect x="2.500" y="2.500" width="19" height="19" rx="1.500" stroke="#555" /><path d="M7 4.500v3l13 12" stroke="#18b918" stroke-width="1.600" />
    <g stroke="#1c84e8" stroke-width="1.200"><path d="M15 4.500v1.500M19.500 16v-5l-2.500-2.500" /><circle cx="15.500" cy="7.500" r="1.600" /></g><g stroke="#e02020" stroke-width="1.200"><path d="M4 19l3-1 2.500-1.500M4.500 16v-3l1-1" /><circle cx="7" cy="11" r="1.600" /><circle cx="11" cy="15.500" r="1.600" /></g>`,
  curve: svg`<circle cx="18.500" cy="5.500" r="2.300" stroke-width="1.500" /><path d="M16.500 6.500Q6.500 8.500 5 18.500" stroke-width="1.600" /><circle cx="4.500" cy="19.500" r="1.800" fill="#222" />`,
  mouse: svg`<rect x="6" y="4" width="13" height="16.500" rx="5.500" stroke-width="1.600" /><path d="M6 11h13M12.500 4v2M12.500 9v2" stroke-width="1.500" /><rect x="11.500" y="6.500" width="2" height="3" />`,
  eye: svg`<g stroke="#3a80e4" stroke-width="1.300"><path d="M3 12q9-12.500 18 0-9 12.500-18 0z" /><circle cx="12" cy="12" r="4.300" /><circle cx="12" cy="12" r="2" /></g>`,
};

@customElement("view-toolbar")
class ViewToolbar extends LitElement {
  static styles = css`
    :host { display: flex; align-items: center; gap: 2px; height: 26px; padding: 0 5px; background: #fafafa; }
    button { flex: none; display: flex; align-items: center; justify-content: center; width: 24px; height: 24px; padding: 0; border: 0; background: none; font: inherit; color: #222; }
    svg { display: block; flex: none; fill: none; stroke: #222; }
    .lit { background: #b9d2fb; }
    .sep { flex: none; width: 1px; height: 20px; margin: 0 1px; background: #ccc; }
    .scheme { width: 109px; height: 22px; border: 1px solid #f00; background: #fff; color: #000; }
    .side { margin-left: auto; }
  `;
  tool(name: string, lit = false) {
    return html`<button class=${lit ? "lit" : ""} aria-label=${name}><svg width="24" height="24" viewBox="0 0 24 24">${tools[name]}</svg></button>`;
  }
  render() {
    const sep = html`<span class="sep"></span>`;
    return html`${this.tool("columns")}${sep}${this.tool("zoomIn")}${this.tool("zoomOut")}${sep}${this.tool("target")}${sep}
      ${this.tool("rotL")}${this.tool("rotR")}${sep}${this.tool("roller")}${sep}${this.tool("mirror")}${this.tool("lamp", true)}
      <button>3D</button>${this.tool("diode", true)}${this.tool("layers", true)}${this.tool("curve")}${sep}${this.tool("mouse")}${sep}
      <button class="scheme">[ColorScheme]</button>${sep}${this.tool("eye")}
      <button class="side" aria-label="Side panel"><svg width="24" height="24" viewBox="0 0 24 24"><g stroke="#707070" stroke-width="2"><path d="M2 3.500h20v17H2zM8 3.500v17" /></g><path d="M12 8h6M12 12h6M12 16h6" stroke="#707070" stroke-width="1.500" /></svg></button>`;
  }
}

/* ---------- shell ---------- */

@customElement("edge-handle")
class EdgeHandle extends LitElement {
  @property() side = "left";
  static styles = css`
    :host { display: flex; flex: none; width: 9px; background: #fbfdfa; }
    button { width: 100%; padding: 0; border: 0; background: none; }
    svg { display: block; width: 100%; }
  `;
  render() {
    const left = this.side === "left";
    return html`<button aria-label="Collapse panel"><svg viewBox="0 0 9 128" fill="none" stroke="#8fccff">
      <path d=${left ? "M0 16.500l8.500 13v85L0 127.500" : "M9 16.500l-8.500 13v85L9 127.500"} fill="#d6ebff" />
      <path d="M6 67l-3 4 3 4" stroke="#4aa8f5" /></svg></button>`;
  }
}

@customElement("app-root")
class AppRoot extends LitElement {
  static styles = css`
    :host { display: flex; flex-direction: column; height: 100vh; overflow: hidden; font: 14px/20px "Noto Sans", "Open Sans", sans-serif; color: #000; background: #fff; }
    button, input { font: inherit; color: inherit; }
    button { padding: 0; background: none; border: 0; }
    .title { display: flex; align-items: center; flex: none; height: 40px; padding: 0 17px 0 12px; color: #fff; background: linear-gradient(100deg, #1fa6fb 0, #2f73ff 240px, #2f79ff 560px, #2e97ff 1100px, #2ca0fe 100%); }
    .title svg { display: block; }
    .name { flex: 1; padding-left: 12px; }
    .win { display: flex; align-items: center; gap: 14px; }
    .win i { width: 1px; height: 20px; margin: 0 -3px; background: #7cc0ff; }
    .win i + button { margin-left: 1px; }
    nav { display: flex; align-items: center; gap: 16px; flex: none; height: 31px; padding: 0 18px; background: #efefef; border-bottom: 1px solid #dcdcdc; font: 15px/20px "Open Sans", "Noto Sans", sans-serif; }
    nav a { color: #000; text-decoration: none; }
    .body { display: flex; flex: 1; min-height: 0; }
    .left { display: flex; flex-direction: column; flex: none; width: 430px; border-right: 1px solid #dcdcdc; }
    .search { display: flex; align-items: center; gap: 10px; height: 39px; padding: 0 5px; border-bottom: 1px solid #dcdcdc; background: #fff; }
    .shrink { width: 49px; height: 30px; border: 1px solid #dcdcdc; border-radius: 3px; background: #fff; }
    .combo { display: flex; align-items: center; flex: 1; height: 28px; min-width: 0; padding: 0 8px; border: 1px solid #dcdcdc; border-radius: 3px; }
    .combo input { flex: 1; min-width: 0; padding: 0; border: 0; outline: 0; background: none; }
    .combo input::placeholder { color: #bdc2cc; opacity: 1; }
    .go { display: flex; align-items: center; justify-content: center; width: 49px; height: 30px; border-radius: 3px; background: #5094ff; }
    .panes { display: flex; flex: 1; min-height: 0; }
    .bar { flex: none; width: 10px; background: #666; }
    .scroll { display: flex; flex-direction: column; align-items: center; flex: none; width: 13px; background: #f0f0f0; }
    .scroll svg { margin: 6px 0 79px; }
    .thumb { width: 10px; height: 48px; border-radius: 5px; background: #666; }
    .main { display: flex; flex-direction: column; flex: 1; min-width: 0; border-left: 1px solid #dcdcdc; }
    .tabs { display: flex; align-items: center; gap: 5px; height: 33px; padding: 0 8px; background: #fafafa; border-bottom: 1px solid #dcdcdc; }
    .tab { display: flex; align-items: center; justify-content: center; gap: 3px; height: 24px; padding: 0 5px; border: 1px solid #777; border-radius: 3px; background: #fdfdfd; color: #777; }
    .tab.on { border-color: #000; color: #000; padding: 0 9px; background: #fff; font: bold 15px/20px "Open Sans", "Noto Sans", sans-serif; }
    .closeall { margin-left: auto; }
    .closeall svg { display: block; }
    .work { display: flex; flex: 1; min-height: 0; }
    .view { display: flex; flex-direction: column; flex: 1; min-width: 0; }
    .canvas { position: relative; flex: 1; min-height: 0; }
    .layers { position: absolute; left: 0; top: 1px; display: flex; flex-direction: column; gap: 6px; padding: 4px; border: 1px solid #dcdcdc; border-radius: 3px; background: #fff; }
    .layers button { width: 25px; height: 24px; background: #4f4f4f; border: 1px solid #777; border-radius: 2px; color: #c8c8c8; font: 14px/20px "Liberation Mono", monospace; overflow: hidden; }
    .layers .first { background: #004300; }
    .layers .tenth { background: #008040; }
    .right { width: 9px; border-left: 1px solid #dcdcdc; }
    footer { flex: none; height: 20px; background: #0091dc; color: #fff; text-align: center; font: 15px/20px "DejaVu Sans Mono", monospace; }
  `;
  render() {
    return html`
      <header class="title">
        <svg width="26" height="30" viewBox="0 0 26 30"><g fill="#fff"><path d="M13 0l2.300 12.500h-4.600zM13 30l2.300-12.500h-4.600zM0 15l10-2v4zM26 15l-10-2v4z" /></g>
          <circle cx="13" cy="15" r="6" fill="none" stroke="#d6ebff" stroke-dasharray="3 3" /><path d="M10 12l6 6M16 12l-6 6" stroke="#2a8cfb" stroke-width="1.500" /><circle cx="13" cy="15" r="1.500" fill="#fff" /></svg>
        <span class="name">XZZ Schematics V4.77 [ VIP Due date: 2025-10-30 17:50:47 ]</span>
        <span class="win">
          <button aria-label="Membership"><svg width="16" height="16" viewBox="0 0 16 16" fill="none" stroke="#e8e83a" stroke-width="1.300"><rect x=".7" y="3.500" width="14.600" height="12" rx="1.500" /><path d="M5 3.500V1.700Q5 .7 6 .7h4q1 0 1 1v1.800M3.500 8.500h9" /></svg></button>
          <i></i>
          <button aria-label="Minimize"><svg width="16" height="16" viewBox="0 0 16 16"><path d="M0 8h16" stroke="#fff" stroke-width="2" /></svg></button>
          <button aria-label="Maximize"><svg width="16" height="16" viewBox="0 0 16 16"><rect x=".7" y=".7" width="14.600" height="14.600" rx="3" fill="none" stroke="#fff" stroke-width="1.400" /></svg></button>
          <button aria-label="Close"><svg width="16" height="16" viewBox="0 0 16 16"><path d="M.5 .5l15 15M15.500 .5l-15 15" stroke="#fff" stroke-width="1.600" /></svg></button>
        </span>
      </header>
      <nav>${["File(F)", "VIP(V)", "Tool(T)", "Settings(S)", "PCB View settings(S)"].map((t) => html`<a href="#">${t}</a>`)}</nav>
      <div class="body">
        <section class="left">
          <div class="search">
            <button class="shrink">Shrink</button>
            <div class="combo">
              <input aria-label="Model number" placeholder="Please input the model number or PCB" />
              <svg width="24" height="14" viewBox="0 0 24 14" fill="none" stroke="#9a9ea8" stroke-width="1.500"><path d="M9.500 3.500l6 6 6-6" /></svg>
            </div>
            <button class="go" aria-label="Search"><svg width="22" height="22" viewBox="0 0 22 22" fill="none" stroke="#fff" stroke-width="1.600"><circle cx="11" cy="11" r="8.500" /><path d="M17 16l3 3.500" /></svg></button>
          </div>
          <div class="panes">
            <category-rail></category-rail>
            <file-tree></file-tree>
            <div class="bar"></div>
            <div class="scroll"><svg width="9" height="6" viewBox="0 0 9 6" fill="none" stroke="#444"><path d="M.5 5l4-4 4 4" /></svg><div class="thumb"></div></div>
          </div>
        </section>
        <edge-handle></edge-handle>
        <section class="main">
          <div class="tabs">
            <button class="tab"><svg width="20" height="20" viewBox="0 0 20 20" fill="none" stroke="#111" stroke-width="1.700"><path d="M1.500 10.500L10 2l8.500 8.500M4 9v9h12V9M8.500 18v-5.500h3V18" /></svg>Member Center</button>
            <button class="tab on">Meizu16XS 81926_1_12 PCB layer.pcb</button>
            <button class="closeall" aria-label="Close all"><svg width="24" height="20" viewBox="0 0 24 20"><path d="M3 16V2.500h15" fill="none" stroke="#777" stroke-width="2" /><rect x="7" y="5" width="13.500" height="13.500" rx="1.500" fill="#777" /><path d="M11 9l5.500 5.500M16.500 9L11 14.500" stroke="#fff" stroke-width="1.500" /></svg></button>
          </div>
          <div class="work">
            <div class="view">
              <view-toolbar></view-toolbar>
              <div class="canvas">
                <board-view></board-view>
                <div class="layers">
                  ${["1", "2", "3", "4", "5", "6", "7", "8", "9", "10", "ALL"].map((t) => html`<button class=${classMap({ first: t === "1", tenth: t === "10" })}>${t}</button>`)}
                </div>
              </div>
            </div>
            <edge-handle class="right" side="right"></edge-handle>
          </div>
        </section>
      </div>
      <footer>XZZ Schematics https://www.xzztools.com</footer>`;
  }
}
